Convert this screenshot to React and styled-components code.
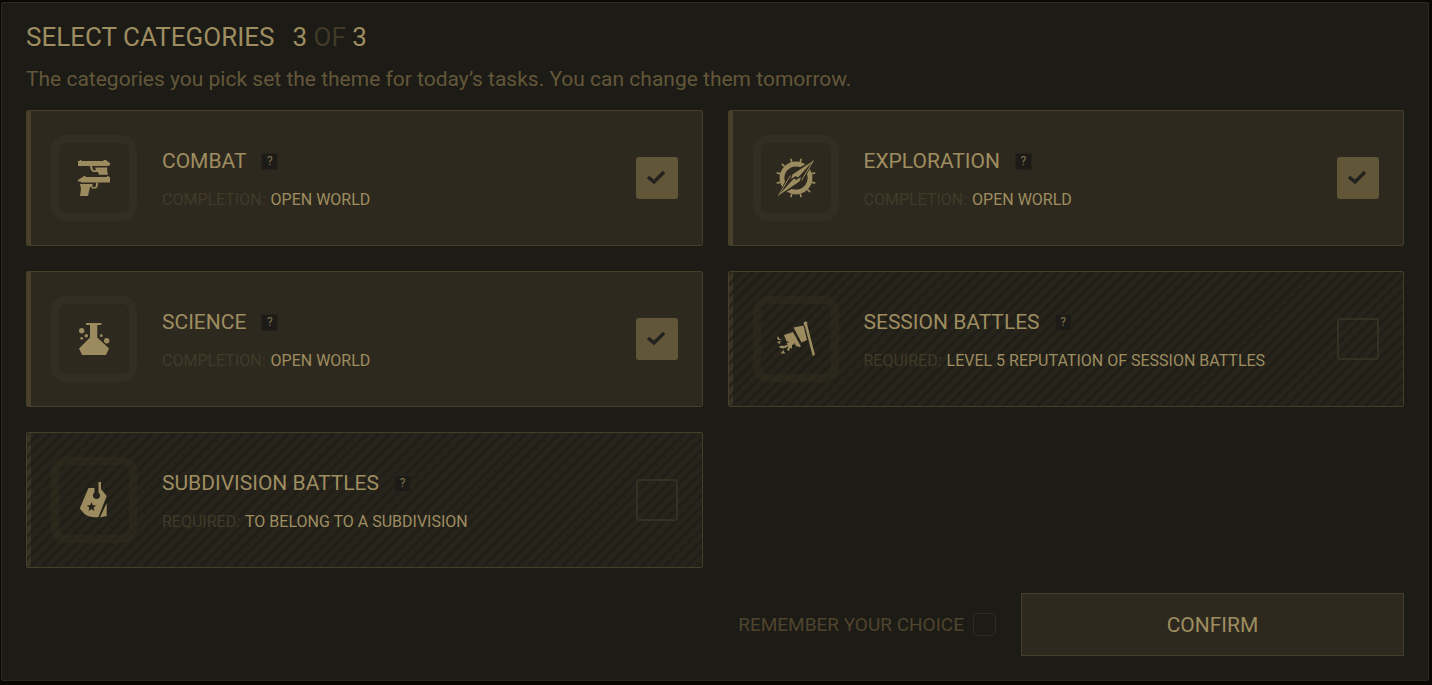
import React from "react";
import styled, { createGlobalStyle, css } from "styled-components";

const GlobalStyle = createGlobalStyle`
  * { box-sizing: border-box; }
  body {
    margin: 0;
    background: #080704;
    font-family: Roboto, "Liberation Sans", sans-serif;
    color: #9e8d60;
  }
  h1, h2, p { margin: 0; font-weight: 400; }
`;

const Page = styled.div`
  min-height: 100vh;
  padding: 2px 3px 4px 1px;
  display: flex;
`;

const Panel = styled.form`
  flex: 1;
  min-width: 0;
  padding: 16px 24px 24px;
  background: #1c1b16;
  border: 1px solid #2d2a1d;
  border-radius: 2px;
`;

const Title = styled.h1`
  display: flex;
  gap: 18px;
  font-size: 26px;
  line-height: 36px;
`;

const Dim = styled.span`
  color: #413a28;
`;

const Subtitle = styled.p`
  margin: 10px 0 17px;
  font-size: 21px;
  line-height: 28px;
  color: #63573a;
`;

const Grid = styled.div`
  display: grid;
  grid-template-columns: repeat(2, minmax(0, 1fr));
  gap: 25px;
`;

const Card = styled.section`
  display: flex;
  align-items: center;
  gap: 25px;
  padding: 24px;
  border: 1px solid #453e28;
  border-radius: 2px;
  background: linear-gradient(90deg, #48402a 4px, #2e291e 4px);
  ${({ $locked }) =>
    $locked &&
    css`
      background:
        repeating-linear-gradient(135deg, #1c1b1699 0 2px, transparent 3px 7px, #1c1b1699 8px),
        linear-gradient(90deg, #393323 4px, #27241b 4px);
    `}
`;

const IconFrame = styled.div`
  flex: none;
  display: grid;
  place-items: center;
  width: 86px;
  height: 86px;
  border: 8px solid ${({ $locked }) => ($locked ? "#34301e66" : "#322e21")};
  border-radius: 15px;
  color: #9b8b5f;
`;

const Info = styled.div`
  flex: 1;
  min-width: 0;
  padding-top: 3px;
`;

const Heading = styled.div`
  display: flex;
  align-items: center;
  gap: 15px;
  margin-bottom: 13px;
`;

const Name = styled.h2`
  font-size: 21px;
  line-height: 28px;
`;

const Help = styled.button`
  width: 17px;
  height: 17px;
  padding: 0;
  border: 1px solid #242219;
  background: #1c1b18;
  color: #80724e;
  font: 12px/15px Roboto, sans-serif;
`;

const Detail = styled.p`
  display: flex;
  gap: 5px;
  font-size: 16px;
  line-height: 24px;
`;

const CheckWrap = styled.span`
  flex: none;
  display: grid;
  width: 42px;
  height: 42px;
  > * { grid-area: 1 / 1; }
`;

const Tick = styled.svg`
  width: 42px;
  height: 42px;
  pointer-events: none;
`;

const Check = styled.input`
  appearance: none;
  margin: 0;
  width: 42px;
  height: 42px;
  border: 2px solid #343022;
  border-radius: 3px;
  &:checked {
    border-color: #615738;
    background: #615738;
  }
  & + ${Tick} { visibility: hidden; }
  &:checked + ${Tick} { visibility: visible; }
`;

const Footer = styled.div`
  display: flex;
  justify-content: flex-end;
  align-items: center;
  gap: 25px;
  margin-top: 25px;
`;

const Remember = styled.label`
  display: flex;
  align-items: center;
  gap: 9px;
  font-size: 19px;
  line-height: 28px;
  color: #4f442d;
`;

const SmallCheck = styled.input`
  appearance: none;
  margin: 0;
  width: 23px;
  height: 23px;
  border: 1px solid #2d2a1f;
  border-radius: 4px;
  &:checked { background: #615738; }
`;

const Confirm = styled.button`
  width: 383px;
  height: 63px;
  border: 1px solid #453f2a;
  background: #2e291e;
  color: #9e8d60;
  font: 21px/28px Roboto, sans-serif;
`;

const Glyph = ({ children }) => (
  <svg width="44" height="44" viewBox="0 0 44 44" fill="currentColor" aria-hidden="true">
    {children}
  </svg>
);

const Pistols = () => (
  <Glyph>
    <path d="M6 5h1.500l.5-1h1l.5 1H31l1-1h2l1 1 3 2v2.500h-2V10H6z" />
    <path d="M23 11.500h12.500L35 14l1 4.700h-9L26 16h-5l-2.200-2L18 10h2l1 3.500 1 .7h2z" />
    <path d="M38 21h-1l-.5-1h-1l-.5 1H14l-1-1h-1l-1.500 1L6 24v1.500h2.500l.5 1h29z" />
    <path d="M8 28h12.500v3H18l-2 9H8l1-7zM20 31h3.500l.8-4.500h2L25.500 31 24 32.500h-5z" />
  </Glyph>
);

const Compass = () => (
  <Glyph>
    <g fill="none" stroke="currentColor">
      <circle cx="22" cy="22" r="14" strokeWidth="4.800" />
      <g strokeWidth="1.600">
        {[15, 75, 105, 135, 165, 195, 255, 285, 315, 345].map((a) => (
          <path key={a} d="M22 6V2" transform={`rotate(${a} 22 22)`} />
        ))}
      </g>
    </g>
    <path d="M39.500 4.500 28 27 4.500 39.500 16 17z" fill="#2e291e" stroke="#2e291e" />
    <path d="M39.500 4.500 18.500 18.500 17 23l5-3 1.500 1.500L25.500 20z" />
    <path d="M4.500 39.500 25.500 25.500 27 21l-5 3-1.500-1.500L18.500 24z" />
    <path d="M39.500 4.500 27.500 24.500M4.500 39.500 16.500 19.500" stroke="currentColor" />
  </Glyph>
);

const Flask = () => (
  <Glyph>
    <path d="M14 6h15.300v2h-4v12.500L37 31.500l-3 6.500H10l-3-6.500 11-11V8h-4z" />
    <circle cx="9.700" cy="13.700" r="2.700" />
    <circle cx="14.300" cy="18.700" r="1.800" />
    <circle cx="9.700" cy="21.300" r="1.400" />
    <circle cx="29.300" cy="18.700" r="1.400" />
    <circle cx="34.700" cy="23.700" r="2.700" />
  </Glyph>
);

const Flag = () => (
  <Glyph>
    <path d="m29.500 7 .5-2 2-.7 1.200.7v2.500L41 38l-2.300 1-7.500-28.500z" />
    <path d="m19.500 10.500 9.500-2 1 2 3 12.500-5.500 2.500z" />
    <path d="m10 18 9-3 8 14.500-1.500.5-3.500-1-1.500-3-1 2-1.500-.5v4l-2-.5-1 3-2-1 1.500-4-3.500 2-1-2 4-1.500.5-3h-2z" />
    <path d="m4 19 1.500 3L8 23H4.500L3 21.500zM3 25l4-1-1.500 3zM5 29.500l3-1 3.500 1-1.500 2-4-.5zM6.500 36.500l3-3.500.5 2 2 1.500zM12.500 26l3.500-.5 1 2-2 2z" />
  </Glyph>
);

const DogTag = () => (
  <Glyph>
    <path
      fillRule="evenodd"
      d="M16.500 10h6v4.500a3.600 3.600 0 1 0 4 0V4H29v7l5.700 7L26.500 39q-8 1-14-3l-4.800-5.500zM19.500 24l-1.300 3.200-3.500.2 2.700 2.200-.9 3.400 3-1.900 3 1.900-.9-3.400 2.700-2.200-3.500-.2z"
    />
    <path d="M34.700 25v13L28 39.500z" />
  </Glyph>
);

const categories = [
  { id: "combat", name: "COMBAT", label: "COMPLETION:", value: "OPEN WORLD", Icon: Pistols },
  { id: "exploration", name: "EXPLORATION", label: "COMPLETION:", value: "OPEN WORLD", Icon: Compass },
  { id: "science", name: "SCIENCE", label: "COMPLETION:", value: "OPEN WORLD", Icon: Flask },
  {
    id: "session",
    name: "SESSION BATTLES",
    label: "REQUIRED:",
    value: "LEVEL 5 REPUTATION OF SESSION BATTLES",
    Icon: Flag,
    locked: true,
  },
  {
    id: "subdivision",
    name: "SUBDIVISION BATTLES",
    label: "REQUIRED:",
    value: "TO BELONG TO A SUBDIVISION",
    Icon: DogTag,
    locked: true,
  },
];

const Category = ({ id, name, label, value, Icon, locked }) => (
  <Card $locked={locked}>
    <IconFrame $locked={locked}>
      <Icon />
    </IconFrame>
    <Info>
      <Heading>
        <Name>
          <label htmlFor={id}>{name}</label>
        </Name>
        <Help type="button">?</Help>
      </Heading>
      <Detail>
        <Dim>{label}</Dim>
        <span>{value}</span>
      </Detail>
    </Info>
    <CheckWrap>
      <Check id={id} type="checkbox" defaultChecked={!locked} disabled={locked} />
      <Tick viewBox="0 0 42 42" aria-hidden="true">
        <path d="m12 20 6 5 10-10" fill="none" stroke="#23211f" strokeWidth="3.500" />
      </Tick>
    </CheckWrap>
  </Card>
);

export default function App() {
  return (
    <Page>
      <GlobalStyle />
      <Panel onSubmit={(e) => e.preventDefault()}>
        <Title>
          <span>SELECT CATEGORIES</span>
          <span>
            3 <Dim>OF</Dim> 3
          </span>
        </Title>
        <Subtitle>
          The categories you pick set the theme for today’s tasks. You can change them tomorrow.
        </Subtitle>
        <Grid>
          {categories.map((c) => (
            <Category key={c.id} {...c} />
          ))}
        </Grid>
        <Footer>
          <Remember>
            REMEMBER YOUR CHOICE
            <SmallCheck type="checkbox" />
          </Remember>
          <Confirm type="submit">CONFIRM</Confirm>
        </Footer>
      </Panel>
    </Page>
  );
}
